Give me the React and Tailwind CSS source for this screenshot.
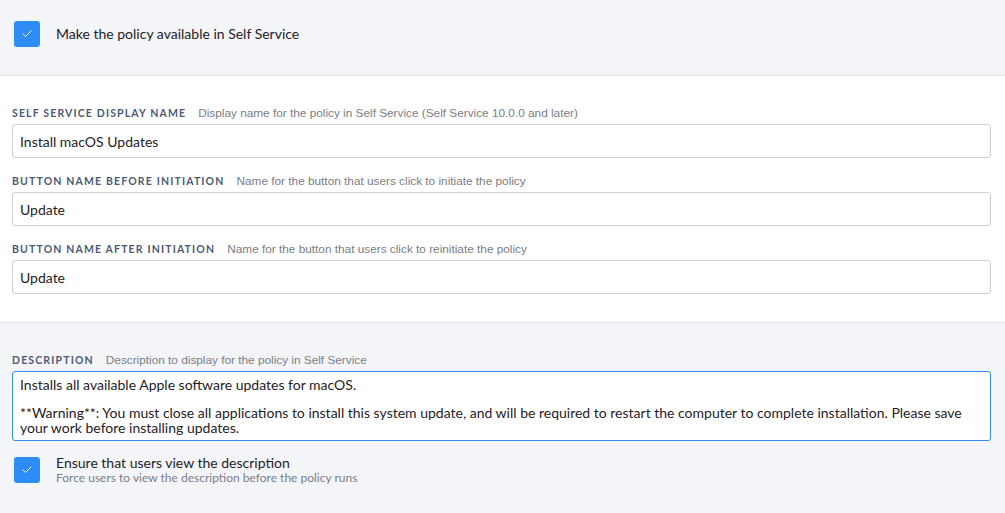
import { Check } from "lucide-react";

function Box() {
  return (
    <div className="w-[26px] h-[26px] shrink-0 rounded-[3px] bg-[#2d8cf7] flex items-center justify-center">
      <Check className="w-3 h-3 text-white" strokeWidth={2} />
    </div>
  );
}

function Label({ label, hint }) {
  return (
    <div className="flex items-baseline h-[13px] mb-[6px] whitespace-nowrap">
      <span className="text-[10.5px] font-bold tracking-[0.11em] text-[#4d5b76] uppercase mr-[12px]">
        {label}
      </span>
      <span className="text-[11.8px] text-[#7a7d85] font-['Liberation_Sans',sans-serif]">
        {hint}
      </span>
    </div>
  );
}

function Field({ label, hint, value, last }) {
  return (
    <div className={last ? "" : "mb-[15px]"}>
      <Label label={label} hint={hint} />
      <div className="h-[34px] border border-[#cdd0da] rounded-[3px] bg-white flex items-center px-[7px] text-[14px] text-[#1f2228]">
        {value}
      </div>
    </div>
  );
}

export default function App() {
  return (
    <div className="w-[1005px] h-[513px] overflow-hidden bg-[#f4f5f9] font-['Lato',sans-serif] text-[#1f2228]">
      {/* availability */}
      <div className="h-[76px] border-b border-[#e3e5ea] px-[14px] pt-[21px]">
        <div className="flex items-center gap-[16px]">
          <Box />
          <span className="text-[14px] -mt-[2px]">Make the policy available in Self Service</span>
        </div>
      </div>

      {/* names */}
      <div className="bg-white h-[247px] border-b border-[#e3e5ea] pl-[12px] pr-[14px] pt-[29px]">
        <Field
          label="Self Service Display Name"
          hint="Display name for the policy in Self Service (Self Service 10.0.0 and later)"
          value="Install macOS Updates"
        />
        <Field
          label="Button Name Before Initiation"
          hint="Name for the button that users click to initiate the policy"
          value="Update"
        />
        <Field
          label="Button Name After Initiation"
          hint="Name for the button that users click to reinitiate the policy"
          value="Update"
          last
        />
      </div>

      {/* description */}
      <div className="pl-[12px] pr-[14px] pt-[29px]">
        <Label label="Description" hint="Description to display for the policy in Self Service" />
        <div className="h-[70px] border border-[#2d8cf7] rounded-[3px] bg-white px-[7px] pt-[5px] text-[14px] leading-[15px]">
          <p>Installs all available Apple software updates for macOS.</p>
          <p className="mt-[13px]">
            **Warning**: You must close all applications to install this system update, and will be required to restart the computer to complete installation. Please save your work before installing updates.
          </p>
        </div>
        <div className="flex items-start gap-[16px] mt-[16px] pl-[2px]">
          <Box />
          <div className="-mt-[2px]">
            <div className="text-[14px] leading-[16px]">Ensure that users view the description</div>
            <div className="text-[12px] leading-[14px] text-[#7a7d85]">
              Force users to view the description before the policy runs
            </div>
          </div>
        </div>
      </div>
    </div>
  );
}
